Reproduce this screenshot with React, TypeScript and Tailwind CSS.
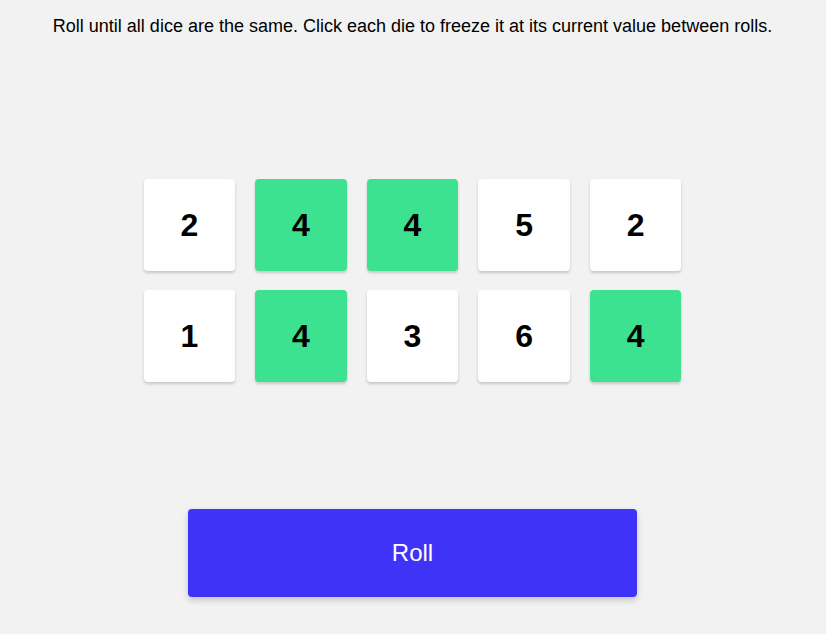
import { useState } from 'react'

const initialDice = [
  { value: 2, held: false },
  { value: 4, held: true },
  { value: 4, held: true },
  { value: 5, held: false },
  { value: 2, held: false },
  { value: 1, held: false },
  { value: 4, held: true },
  { value: 3, held: false },
  { value: 6, held: false },
  { value: 4, held: true },
]

export default function App() {
  const [dice, setDice] = useState(initialDice)

  const toggle = (i: number) => {
    setDice(dice.map((d, j) => (j === i ? { ...d, held: !d.held } : d)))
  }

  const roll = () => {
    setDice(dice.map((d) => (d.held ? d : { ...d, value: Math.ceil(Math.random() * 6) })))
  }

  return (
    <div
      className="min-h-screen w-full bg-[#f2f2f2] flex flex-col items-center text-black pr-[1px]"
      style={{ fontFamily: '"Liberation Sans", Arial, sans-serif' }}
    >
      <p className="pt-[15px] text-[18px] leading-[22px] text-center">
        Roll until all dice are the same. Click each die to freeze it at its current value between rolls.
      </p>

      <div className="mt-[142px] grid grid-cols-5 gap-x-[20px] gap-y-[19px]">
        {dice.map((d, i) => (
          <button
            key={i}
            onClick={() => toggle(i)}
            className={`w-[91.6px] h-[92px] rounded-[4px] flex items-center justify-center text-[32px] font-bold shadow-[0_2px_3px_rgba(0,0,0,0.18)] ${
              d.held ? 'bg-[#3ce28f]' : 'bg-white'
            }`}
          >
            {d.value}
          </button>
        ))}
      </div>

      <button
        onClick={roll}
        className="mt-[127px] w-[449px] h-[88px] rounded-[4px] bg-[#3f33f8] text-white text-[24px] shadow-[0_3px_6px_rgba(0,0,0,0.2)]"
      >
        Roll
      </button>
    </div>
  )
}
